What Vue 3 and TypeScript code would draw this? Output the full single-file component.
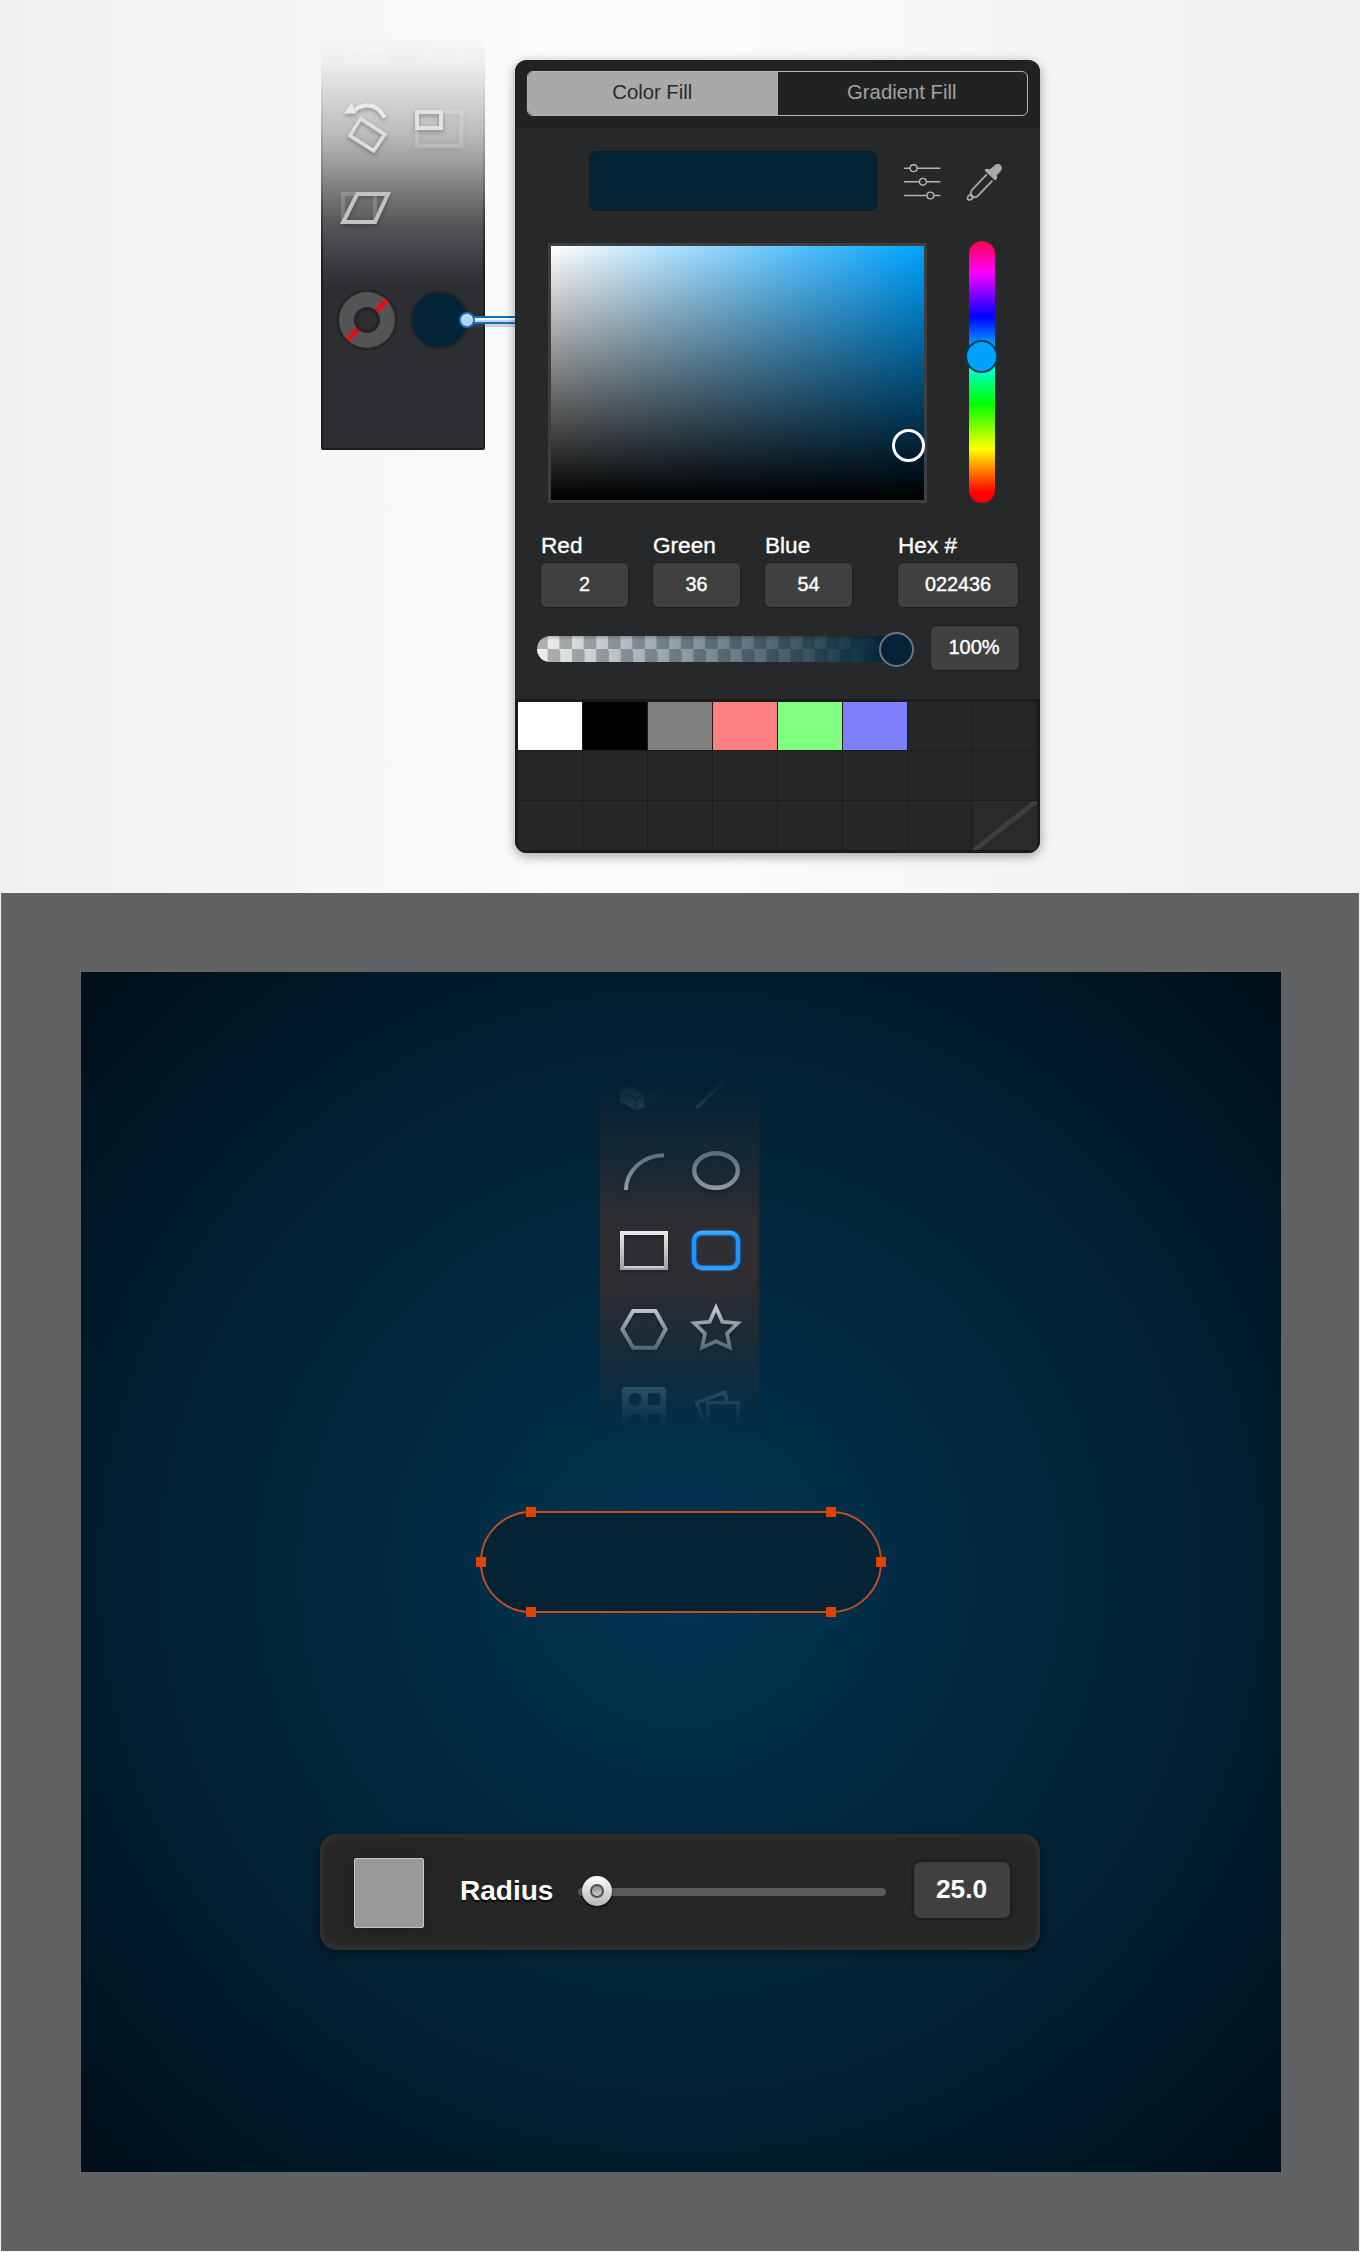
<script setup lang="ts">
interface Field {
  label: string
  value: string
  wide?: boolean
}

const fields: Field[] = [
  { label: 'Red', value: '2' },
  { label: 'Green', value: '36' },
  { label: 'Blue', value: '54' },
  { label: 'Hex #', value: '022436', wide: true },
]

const saved: string[] = ['#ffffff', '#000000', '#808080', '#ff8080', '#80ff80', '#8080ff']
const slots: (string | null)[] = Array.from({ length: 24 }, (_, i) => saved[i] ?? null)

const handles: [number, number][] = [
  [50, 0],
  [350, 0],
  [0, 50],
  [400, 50],
  [50, 100],
  [350, 100],
]
</script>

<template>
  <div class="page">
    <section class="light">
      <div class="tools">
        <div class="row row-cut">
          <svg width="72" height="50" viewBox="-36 -25 72 50">
            <path fill-rule="evenodd" d="M-23-17H19V3H-23Z M-11-14a5 5 0 1 0 .1 0Z M9-14L14-5H4Z" fill="#fff" opacity=".2" />
          </svg>
          <svg width="72" height="50" viewBox="-36 -25 72 50">
            <path d="M-15-15L-8 1H22V-16" fill="none" stroke="#fff" stroke-width="4" opacity=".2" />
          </svg>
        </div>
        <div class="row">
          <svg class="drop" width="72" height="80" viewBox="-36 -40 72 80">
            <path d="M-12-18C-3-25 10-25 17.6-10.5" fill="none" stroke="#e9e9e9" stroke-width="4.2" />
            <path d="M-23.3-14.3L-15.3-25.7L-10.5-14.5Z" fill="#e9e9e9" />
            <path d="M-6.6-9.4L17.8 6.4L6.6 22.8L-17 7.6Z" fill="none" stroke="#dedede" stroke-width="3.7" />
          </svg>
          <svg class="drop" width="72" height="80" viewBox="-36 -40 72 80">
            <rect x="-22" y="-16" width="44.3" height="34" fill="none" stroke="#fff" stroke-width="4" opacity=".2" />
            <rect x="-22" y="-16" width="24" height="16" fill="none" stroke="#e2e2e2" stroke-width="4" />
          </svg>
        </div>
        <div class="row">
          <svg class="drop" width="72" height="80" viewBox="-36 -40 72 80">
            <rect x="-24" y="-14" width="32" height="28" fill="none" stroke="#fff" stroke-width="4" opacity=".18" />
            <path d="M-9.8-14H20.9L8 14H-23.8Z" fill="none" stroke="#c3c3c4" stroke-width="4" />
          </svg>
        </div>
        <div class="row row-swatches">
          <svg width="72" height="80" viewBox="-36 -40 72 80">
            <circle r="30.5" fill="#242527" />
            <circle r="28" fill="#525456" />
            <path d="M-19.5 19.5L20-19.6" stroke="#e5100c" stroke-width="5" />
            <circle r="13" fill="#242527" />
            <circle r="9.5" fill="#2c2d30" />
          </svg>
          <svg width="72" height="80" viewBox="-36 -40 72 80">
            <circle r="30.5" fill="#27282a" />
            <circle r="27.6" fill="#022436" />
          </svg>
        </div>
        <div class="connector"><i class="wire"></i><i class="dot"></i></div>
      </div>

      <div class="panel">
        <header class="head">
          <div class="segment">
            <span class="seg on">Color Fill</span>
            <span class="seg">Gradient Fill</span>
          </div>
        </header>

        <div class="preview-row">
          <div class="preview"></div>
          <svg class="ic-sliders" width="38" height="36" viewBox="0 0 38 36" fill="none" stroke="#b4b4b4" stroke-width="1.4">
            <path d="M1 4.2H7.2M14 4.2H37.4M1 17.8H16.3M23.4 17.8H37.4M1 31.5H23.8M31 31.5H37.4" />
            <circle cx="10.6" cy="4.2" r="3.4" />
            <circle cx="19.9" cy="17.8" r="3.4" />
            <circle cx="27.4" cy="31.5" r="3.4" />
          </svg>
          <svg class="ic-dropper" width="38" height="38" viewBox="0 0 38 38">
            <path d="M28.6 3.2C31 .4 34.4 .6 35.8 2.2C37.4 4 37.3 6.6 35 9L31.6 12.6C33 14.6 32 16.6 30 17.4L19.5 7.6C20.4 5.4 22.6 5 24.6 6.6Z" fill="#aaa" />
            <path d="M21.8 11.4L6.5 27.4L5.4 32.2L7.8 34.6L12 33.6L27.4 17.6" fill="none" stroke="#aaa" stroke-width="1.8" />
            <path d="M6.4 31.4L3.4 32.6L2.2 35.8L4.2 37L7 36L8.4 33.8Z" fill="none" stroke="#aaa" stroke-width="1.6" />
          </svg>
        </div>

        <div class="picker-row">
          <div class="field-sv"><i class="ring"></i></div>
          <div class="hue"><i class="hue-knob"></i></div>
        </div>

        <div class="inputs">
          <label v-for="f in fields" :key="f.label" class="input" :class="{ wide: f.wide }">
            <span class="name">{{ f.label }}</span>
            <span class="box">{{ f.value }}</span>
          </label>
        </div>

        <div class="alpha-row">
          <div class="alpha"><i class="alpha-knob"></i></div>
          <span class="box pct">100%</span>
        </div>

        <div class="palette">
          <div v-for="(c, i) in slots" :key="i" class="slot" :style="c ? { background: c } : {}">
            <svg v-if="i === 23" width="64" height="49" viewBox="0 0 64 49">
              <rect width="64" height="49" fill="#2a2a2a" />
              <path d="M-1 51L65-1" stroke="#3e3e3e" stroke-width="5" />
            </svg>
          </div>
        </div>
      </div>
    </section>

    <section class="frame">
      <div class="canvas">
        <div class="shapes">
          <svg width="0" height="0" class="defs">
            <defs>
              <linearGradient id="metal" gradientUnits="userSpaceOnUse" x1="0" y1="-21" x2="0" y2="20">
                <stop offset="0" stop-color="#ececec" />
                <stop offset="1" stop-color="#9c9c9d" />
              </linearGradient>
              <linearGradient id="azure" gradientUnits="userSpaceOnUse" x1="0" y1="-21" x2="0" y2="20">
                <stop offset="0" stop-color="#5db8ff" />
                <stop offset=".15" stop-color="#1b95ff" />
                <stop offset=".85" stop-color="#1b95ff" />
                <stop offset="1" stop-color="#3fa8ff" />
              </linearGradient>
            </defs>
          </svg>
          <div class="row row-top">
            <svg width="72" height="53" viewBox="-36 -13 72 53">
              <path d="M-24 0L-14-5L0 3V16L-8 19L-24 11Z" fill="#b9c2c8" opacity=".8" />
              <path d="M-23.5 1L-8.5 7.5L0 4M-8.5 7.5V18" fill="none" stroke="#2c2d30" stroke-width="1.2" />
              <path d="M2 4L20-6V4L2 15Z" fill="#b9c2c8" opacity=".2" />
            </svg>
            <svg width="72" height="53" viewBox="-36 -13 72 53">
              <path d="M-19.3 16.7L9-10" stroke="#b9c2c8" stroke-width="3.6" opacity=".8" />
            </svg>
          </div>
          <div class="row">
            <svg class="drop" width="72" height="80" viewBox="-36 -40 72 80">
              <path d="M-18 19A38 34.7 0 0 1 20-15.7" fill="none" stroke="#ccccce" stroke-width="4" />
            </svg>
            <svg class="drop" width="72" height="80" viewBox="-36 -40 72 80">
              <ellipse cy="-.5" rx="21.8" ry="17.2" fill="none" stroke="#c6c6c8" stroke-width="4.4" />
            </svg>
          </div>
          <div class="row">
            <svg class="drop" width="72" height="80" viewBox="-36 -40 72 80">
              <rect x="-22" y="-18" width="44" height="35" fill="none" stroke="url(#metal)" stroke-width="4" />
              <path d="M-20 16H20" stroke="#d2d2d2" stroke-width="2" />
            </svg>
            <svg class="glow" width="72" height="80" viewBox="-36 -40 72 80">
              <rect x="-22" y="-18" width="44" height="35" rx="8" fill="none" stroke="url(#azure)" stroke-width="4.4" />
            </svg>
          </div>
          <div class="row">
            <svg class="drop" width="72" height="80" viewBox="-36 -40 72 80">
              <path d="M-21.7-1.7L-10.9-20H11.5L21.7-1.7L11.5 16.7H-10.9Z" fill="none" stroke="url(#metal)" stroke-width="4" />
            </svg>
            <svg class="drop" width="72" height="80" viewBox="-36 -40 72 80">
              <path
                d="M0-23.5L6.3-9.2L21.7-7.8L11 2.6L13.9 16.6L0 10.4L-13.9 16.6L-11 2.6L-21.7-7.8L-6.3-9.2Z"
                fill="none"
                stroke="url(#metal)"
                stroke-width="3.7"
                stroke-miterlimit="8"
              />
            </svg>
          </div>
          <div class="row row-bottom">
            <svg width="72" height="60" viewBox="-36 -40 72 60">
              <path
                fill="#aab4ba"
                fill-rule="evenodd"
                d="M-18-24H18Q22-24 22-20V20H-22V-20Q-22-24-18-24Z M-9-18.2a6.5 6.5 0 1 0 .1 0Z M4-17.7V-6H16.3V-17.7Z M-9 2.5a6.5 6.5 0 1 0 .1 0Z M4 3V16H16.3V3Z"
              />
            </svg>
            <svg width="72" height="60" viewBox="-36 -40 72 60" fill="none" stroke="#aab4ba" stroke-width="3.6">
              <path d="M-11 13L-19.4-8.4L8.6-18.4L11.4-10" />
              <path d="M-8.2 20V-8.2H22.2V20" />
            </svg>
          </div>
        </div>

        <svg class="pill" width="412" height="112" viewBox="-6 -6 412 112">
          <rect width="400" height="100" rx="50" fill="#042436" stroke="#c04f24" stroke-width="1.9" />
          <rect v-for="([x, y], i) in handles" :key="i" :x="x - 5" :y="y - 5" width="10" height="10" fill="#dc4400" />
        </svg>

        <div class="radius-bar">
          <div class="chip"></div>
          <span class="caption">Radius</span>
          <div class="track"><i class="knob"></i></div>
          <span class="amount">25.0</span>
        </div>
      </div>
    </section>
  </div>
</template>

<style>
body {
  background: #f4f4f4;
}
</style>

<style scoped>
.page {
  width: 1360px;
  height: 2252px;
  overflow: hidden;
  font-family: 'Liberation Sans', Arial, sans-serif;
}
.page * {
  box-sizing: border-box;
}
svg {
  display: block;
  flex: none;
}
i {
  display: block;
}
.light {
  height: 893px;
  display: flex;
  align-items: flex-start;
  padding-left: 321px;
  gap: 30px;
  background: linear-gradient(90deg, #f0f0f0, #fbfbfb 42%, #fbfbfb 52%, #efefef);
}
.row {
  display: flex;
  height: 80px;
}
.drop {
  filter: drop-shadow(0 2px 2px rgba(0, 0, 0, 0.3));
}
.glow {
  filter: drop-shadow(0 0 1.5px rgba(20, 110, 240, 0.8));
}

/* fading tool strip */
.tools {
  position: relative;
  width: 164px;
  height: 412px;
  margin-top: 38px;
  padding: 0 10px;
  border-radius: 0 0 3px 3px;
  background: linear-gradient(
    rgba(250, 250, 250, 0) 0,
    #ededee 26px,
    #d7d7d8 56px,
    #bfbfc0 92px,
    #9d9d9e 125px,
    #7f7f80 149px,
    #69696b 169px,
    #545357 189px,
    #403f43 220px,
    #2d2e31 248px
  );
}
.tools::before {
  content: '';
  position: absolute;
  inset: 0;
  border-radius: 0 0 3px 3px;
  border: 2px solid #1c1d1f;
  border-top: 0;
  box-shadow: 0 3px 10px rgba(0, 0, 0, 0.3);
  clip-path: inset(0 -20px -20px -20px);
  mask: linear-gradient(transparent 30px, rgba(0, 0, 0, 0.2) 150px, #000 240px) 0 0 / 100% 100% no-repeat border-box;
  mask-clip: no-clip;
}
.row-cut {
  height: 50px;
}
.row-swatches {
  margin-top: 32px;
}
.connector {
  position: absolute;
  left: 138px;
  top: 274px;
  width: 56px;
  height: 16px;
}
.wire {
  position: absolute;
  left: 10px;
  right: 0;
  top: 4px;
  height: 8px;
  background: linear-gradient(#126fb8 2px, #f4f8ff 2px, #f4f8ff 4px, #c2d9f6 4px, #c2d9f6 6px, #126fb8 6px);
  box-shadow: 0 3px 1px rgba(80, 100, 130, 0.25);
}
.dot {
  position: absolute;
  left: 0;
  top: 0;
  width: 16px;
  height: 16px;
  border-radius: 50%;
  border: 2px solid #1a74c4;
  background: radial-gradient(circle at 50% 55%, #b4d3fb 45%, #e3f0ff 75%);
}

/* colour panel */
.panel {
  width: 525px;
  height: 793px;
  margin-top: 60px;
  border-radius: 12px;
  overflow: hidden;
  background: #262829;
  box-shadow: 0 3px 12px rgba(0, 0, 0, 0.36);
  position: relative;
}
.head {
  height: 68px;
  padding: 11px 12px 0;
  background: #212224;
}
.segment {
  width: 501px;
  height: 45px;
  display: flex;
  border: 1.5px solid #b4b4b4;
  border-radius: 6px;
  overflow: hidden;
}
.seg {
  flex: 1;
  text-align: center;
  font-size: 20.3px;
  line-height: 40px;
  padding-right: 1px;
  color: #a2a2a2;
}
.seg.on {
  background: #a9a9a9;
  color: #2a2b2d;
}
.preview-row {
  display: flex;
  padding: 23px 0 0 74px;
  height: 115px;
}
.preview {
  width: 288px;
  height: 60px;
  border-radius: 7px;
  background: #022436;
  border: 1px solid #13191e;
}
.ic-sliders {
  margin: 13px 0 0 26px;
}
.ic-dropper {
  margin: 12px 0 0 24px;
}
.picker-row {
  display: flex;
  height: 263px;
  padding-left: 33px;
  margin-top: -2px;
}
.field-sv {
  position: relative;
  width: 379px;
  height: 260px;
  margin-top: 2px;
  border: 3px solid #3d3e40;
  background:
    linear-gradient(transparent, #000) padding-box,
    linear-gradient(90deg, #fff, #00a2ff) padding-box;
}
.ring {
  position: absolute;
  left: 341px;
  top: 183px;
  width: 33px;
  height: 33px;
  border: 3px solid #fff;
  border-radius: 50%;
}
.hue {
  position: relative;
  width: 26px;
  height: 262px;
  margin-left: 42px;
  border-radius: 13px;
  background: linear-gradient(
    #ff0048 0,
    #ff00ff 31px,
    #00f 76px,
    #0ff 120px,
    #0f0 163px,
    #ff0 208px,
    #f00 251px
  );
}
.hue-knob {
  position: absolute;
  left: -4px;
  top: 99px;
  width: 33px;
  height: 33px;
  border-radius: 50%;
  border: 2px solid #0b3c58;
  background: #00a2ff;
}
.inputs {
  display: flex;
  gap: 23px;
  padding-left: 25px;
  margin-top: 29px;
}
.input {
  width: 89px;
}
.input.wide {
  width: 122px;
  margin-left: 21px;
}
.name {
  display: block;
  height: 29px;
  line-height: 25px;
  padding-left: 1px;
  font-size: 22.6px;
  color: #fff;
  -webkit-text-stroke: 0.35px #fff;
}
.box {
  display: block;
  height: 46px;
  line-height: 42px;
  border-radius: 6px;
  border: 1px solid #1b1c1d;
  background: #404040;
  color: #fff;
  font-size: 19.8px;
  text-align: center;
  -webkit-text-stroke: 0.4px #fff;
}
.alpha-row {
  display: flex;
  align-items: center;
  padding-left: 22px;
  margin-top: 17px;
}
.alpha {
  position: relative;
  width: 372px;
  height: 26px;
  border-radius: 13px;
  margin-top: 2px;
  background:
    linear-gradient(rgba(0, 0, 0, 0.2), transparent 4px),
    linear-gradient(90deg, rgba(2, 36, 54, 0), rgba(2, 36, 54, 1) 95%),
    repeating-conic-gradient(#b2b2b2 0 25%, #f0f0f0 0 50%) 10.7px 0 / 24.3px 26px;
}
.alpha-knob {
  position: absolute;
  left: 341.5px;
  top: -4.5px;
  width: 35px;
  height: 35px;
  border-radius: 50%;
  border: 2px solid #6c7780;
  background: #022436;
}
.pct {
  width: 90px;
  margin-left: 21px;
  padding-right: 2px;
  line-height: 43px;
  font-size: 20px;
}
.palette {
  position: absolute;
  left: 0;
  bottom: 0;
  width: 525px;
  height: 154px;
  padding: 3px 3px 3px;
  display: grid;
  grid-template-columns: repeat(8, 64px);
  grid-template-rows: 48px 49px 49px;
  gap: 1px;
  background: #1b1b1b;
}
.slot {
  background: #262626;
}

/* artboard */
.frame {
  width: 1358px;
  height: 1358px;
  margin-left: 1px;
  padding: 79px 0 0 80px;
  background: #616263;
}
.canvas {
  width: 1200px;
  height: 1200px;
  display: flex;
  flex-direction: column;
  align-items: center;
  background: radial-gradient(circle at 50% 50%, #033452 0, #022d46 200px, #022438 420px, #001929 660px, #000f19 848px);
}
.shapes {
  position: relative;
  width: 160px;
  height: 353px;
  margin-top: 106px;
  margin-left: -2px;
  padding: 0 8px;
  background: #2e2d31;
  border-right: 2px solid #26262a;
  mask: linear-gradient(
    transparent 0,
    rgba(0, 0, 0, 0.13) 22px,
    rgba(0, 0, 0, 0.55) 90px,
    #000 143px,
    #000 200px,
    rgba(0, 0, 0, 0.62) 258px,
    rgba(0, 0, 0, 0.24) 312px,
    transparent 348px
  );
}
.defs {
  position: absolute;
}
.row-top {
  height: 53px;
}
.row-bottom {
  height: 60px;
}
.pill {
  margin-top: 75px;
}
.radius-bar {
  width: 720px;
  height: 116px;
  margin-top: 216px;
  margin-left: -2px;
  display: flex;
  align-items: center;
  padding-left: 34px;
  border-radius: 17px;
  background: #262626;
  box-shadow:
    inset 0 0 10px 1px #3a3837,
    0 2px 6px rgba(0, 0, 0, 0.5);
}
.chip {
  width: 70px;
  height: 70px;
  margin-top: 2px;
  border: 1.5px solid #c6c6c6;
  border-radius: 2px;
  background: #999;
  box-shadow: 0 2px 14px rgba(0, 0, 0, 0.25);
}
.caption {
  width: 94px;
  margin-left: 36px;
  margin-top: -2px;
  font-size: 28px;
  font-weight: 700;
  line-height: 32px;
  color: #fff;
  text-shadow: 0 2px 1px #000;
}
.track {
  position: relative;
  width: 308px;
  height: 8px;
  margin-left: 24px;
  border-radius: 4px;
  background: #5a5a5a;
}
.knob {
  position: absolute;
  left: 4px;
  top: -12px;
  width: 30px;
  height: 30px;
  border-radius: 50%;
  background: linear-gradient(#fff, #b4b4b4);
  box-shadow: 0 2px 3px rgba(0, 0, 0, 0.7);
}
.knob::after {
  content: '';
  position: absolute;
  box-sizing: border-box;
  left: 8px;
  top: 8px;
  width: 14px;
  height: 14px;
  border-radius: 50%;
  border: 2px solid #505050;
  background: linear-gradient(#8a8a8a, #d0d0d0);
}
.amount {
  width: 96px;
  height: 56px;
  margin-left: 28px;
  margin-top: -4px;
  border-radius: 7px;
  background: #404040;
  box-shadow: 0 0 4px #111;
  color: #fff;
  font-size: 26.3px;
  font-weight: 700;
  line-height: 54px;
  padding-right: 1px;
  text-align: center;
}
</style>
